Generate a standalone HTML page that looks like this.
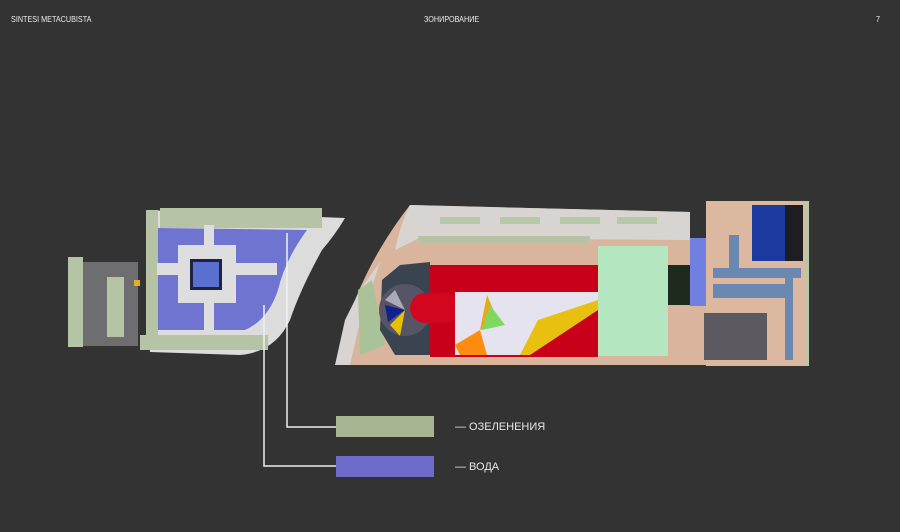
<!DOCTYPE html>
<html><head><meta charset="utf-8"><style>
html,body{margin:0;padding:0;background:#333333;width:900px;height:532px;overflow:hidden}
.t{position:absolute;color:#ececec;font-family:"Liberation Sans",sans-serif;font-size:8.5px;top:14px;transform:scaleX(0.85);transform-origin:left}
.l{position:absolute;color:#e6e6e6;font-family:"Liberation Sans","Noto Sans CJK SC",sans-serif;font-size:11px}
</style></head><body>
<div class="t" style="left:11px">SINTESI METACUBISTA</div>
<div class="t" style="left:424px">ЗОНИРОВАНИЕ</div>
<div class="t" style="left:876px">7</div>
<svg width="900" height="532" style="position:absolute;left:0;top:0">
<!-- left site -->
<rect x="68" y="262" width="70" height="84" fill="#6e6d70"/>
<rect x="68" y="257" width="15" height="90" fill="#b5c4a5"/>
<rect x="107" y="277" width="17" height="60" fill="#b5c4a5"/>
<rect x="134" y="280" width="6" height="6" fill="#e0b020"/>
<path d="M146 210 L345 218 Q335 235 322 250 Q300 290 290 320 Q275 352 240 355 L150 352 Z" fill="#dcdcdc"/>
<rect x="160" y="208" width="162" height="20" fill="#b6c3a4"/>
<rect x="146" y="210" width="12" height="125" fill="#b6c3a4"/>
<path d="M158 228 L307 230 Q285 260 278 290 Q268 320 245 330 L158 330 Z" fill="#6f74d0"/>
<rect x="178" y="245" width="58" height="58" fill="#dedede"/>
<rect x="204" y="225" width="10" height="105" fill="#dedede"/>
<rect x="157" y="263" width="120" height="12" fill="#dedede"/>
<rect x="190" y="259" width="32" height="31" fill="#1f2240"/>
<rect x="193" y="262" width="26" height="25" fill="#5a70d0"/>
<rect x="140" y="335" width="128" height="15" fill="#b6c3a4"/>
<!-- right site -->
<path d="M335 365 L355 300 Q375 250 410 205 L690 212 L690 305 L706 305 L706 365 Z" fill="#d9b59e"/>
<path d="M410 205 L690 212 L690 240 L420 238 L395 250 Q400 225 410 205 Z" fill="#d8d4d2"/>
<path d="M335 365 L345 320 L360 290 L380 262 L358 330 L350 365 Z" fill="#d8d4d2"/>
<rect x="440" y="217" width="40" height="7" fill="#b6c8a8"/>
<rect x="500" y="217" width="40" height="7" fill="#b6c8a8"/>
<rect x="560" y="217" width="40" height="7" fill="#b6c8a8"/>
<rect x="617" y="217" width="40" height="7" fill="#b6c8a8"/>
<rect x="418" y="236" width="172" height="7" fill="#b7c2a2"/>
<path d="M358 290 L372 280 L385 345 L360 355 Z" fill="#a9c298"/>
<path d="M382 280 L400 265 L430 262 L430 355 L395 355 L380 330 Z" fill="#3a4450"/>
<circle cx="405" cy="310" r="26" fill="#556"/>
<path d="M405 310 L390 325 L400 336 Z" fill="#e8c000"/>
<path d="M405 310 L385 305 L388 322 Z" fill="#102090"/>
<path d="M405 310 L395 290 L385 300 Z" fill="#aab"/>
<rect x="430" y="265" width="168" height="92" fill="#c8001a"/>
<rect x="410" y="293" width="50" height="30" rx="15" fill="#d2061e"/>
<rect x="455" y="292" width="143" height="63" fill="#e4e3ee"/>
<path d="M598 300 L598 355 L520 355 L538 320 L598 300 Z" fill="#e8c010"/>
<path d="M598 310 L598 355 L530 355 Z" fill="#c8001a"/>
<path d="M487 295 L500 325 L480 330 Z" fill="#e8a818"/>
<path d="M490 305 L505 325 L482 330 Z" fill="#7fd860"/>
<path d="M480 330 L455 345 L460 355 L487 355 Z" fill="#ff8c10"/>
<rect x="598" y="246" width="70" height="110" fill="#b4e6c0"/>
<rect x="668" y="265" width="22" height="40" fill="#1e2a1e"/>
<rect x="690" y="238" width="16" height="68" fill="#7080e0"/>
<rect x="706" y="201" width="102" height="165" fill="#ddb8a0"/>
<rect x="806" y="201" width="3" height="165" fill="#b6c8a8"/>
<rect x="752" y="205" width="48" height="56" fill="#1a3aa0"/>
<rect x="785" y="205" width="18" height="56" fill="#1e1e22"/>
<rect x="729" y="235" width="10" height="35" fill="#6a88b0"/>
<rect x="713" y="268" width="88" height="10" fill="#6a88b0"/>
<rect x="713" y="284" width="78" height="14" fill="#6a88b0"/>
<rect x="785" y="278" width="8" height="82" fill="#6a88b0"/>
<rect x="704" y="313" width="63" height="47" fill="#5c5a60"/>
<!-- leader lines -->
<polyline points="287,233 287,427 336,427" fill="none" stroke="#f0f0f0" stroke-width="1.5"/>
<polyline points="264,305 264,466 336,466" fill="none" stroke="#f0f0f0" stroke-width="1.5"/>
<rect x="336" y="416" width="98" height="21" fill="#a8b592"/>
<rect x="336" y="456" width="98" height="21" fill="#6f6bcb"/>
</svg>
<div class="l" style="left:455px;top:421px">— ОЗЕЛЕНЕНИЯ</div>
<div class="l" style="left:455px;top:461px">— ВОДА</div>
</body></html>
